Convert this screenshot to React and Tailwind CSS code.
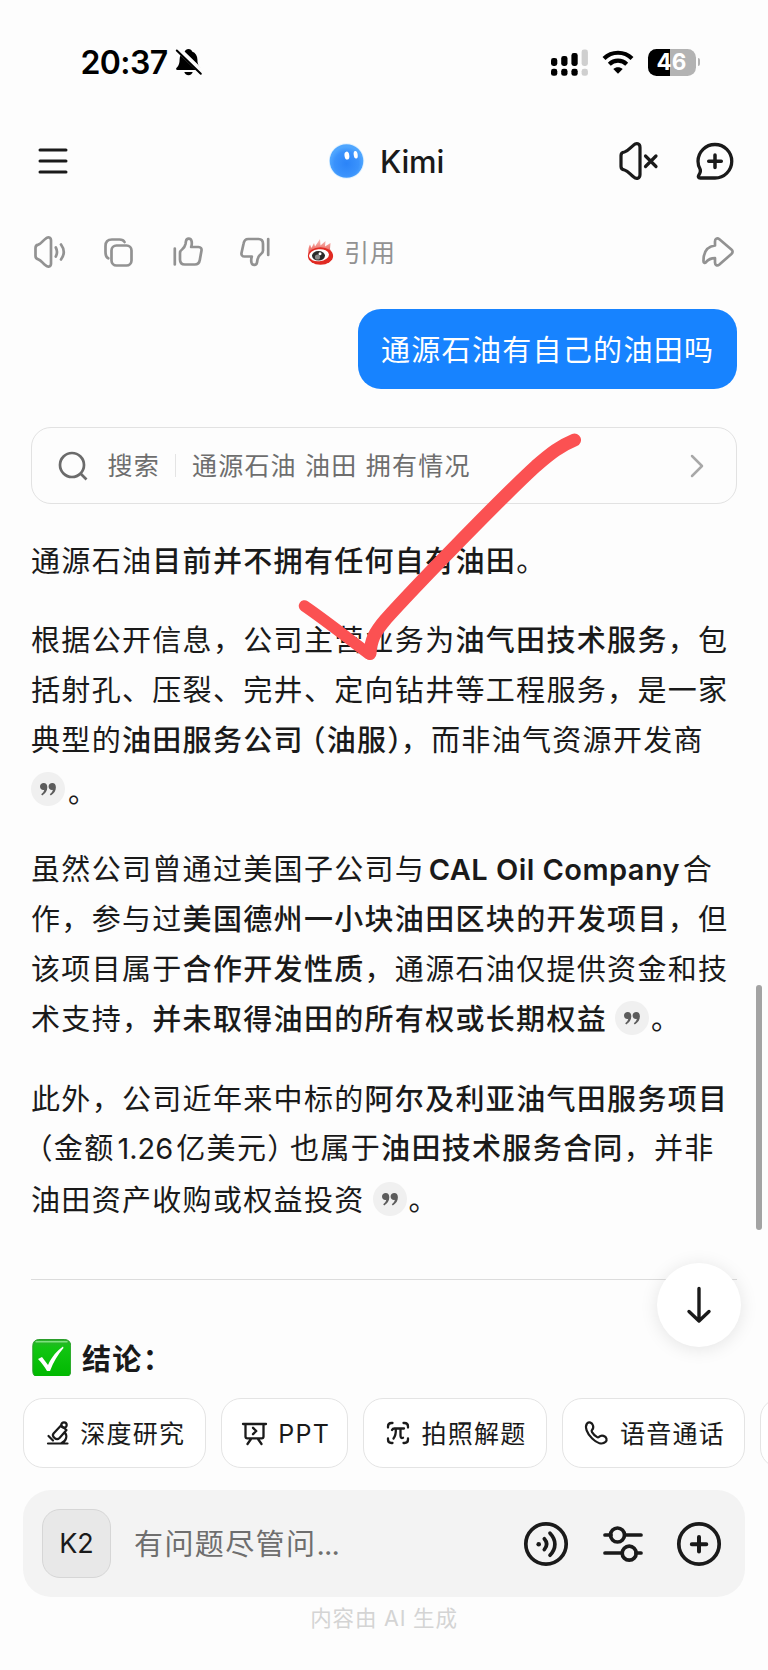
import { clsx } from "clsx";

const INK = "#1a1a1a";

function Icon({ w, h, stroke = INK, sw = 3, className, children }) {
  return (
    <svg
      width={w}
      height={h}
      viewBox={`0 0 ${w} ${h}`}
      fill="none"
      stroke={stroke}
      strokeWidth={sw}
      strokeLinecap="round"
      strokeLinejoin="round"
      className={clsx("shrink-0 overflow-visible", className)}
    >
      {children}
    </svg>
  );
}

function StatusBar() {
  return (
    <div className="flex h-[124px] items-center pl-[80.500px] pr-[68px]">
      <span className="w-[94.500px] whitespace-nowrap pt-[2px] text-[32px] font-semibold leading-none tracking-[-0.6px] text-black">
        20:37
      </span>
      <Icon w={27} h={28} stroke="none">
        <path
          d="M13.5 1c-1.9 0-3.3 1-3.6 2.4C6.300 4.700 4.600 7.800 4.600 11.500c0 4.800-1.400 6.600-3 8.300-1 1.200-.5 2.200.8 2.200h22.200c1.300 0 1.800-1 .8-2.200-1.600-1.700-3-3.500-3-8.300 0-3.700-1.700-6.800-5.300-8.100C16.800 2 15.400 1 13.500 1z"
          fill="#000"
        />
        <path d="M9.300 24h8.400c-.5 2-2 3.200-4.200 3.200S9.800 26 9.300 24z" fill="#000" />
        <path d="M3.200 1.200 27.500 24.800" stroke="#fdfdfd" strokeWidth="5.500" />
        <path d="M1.800 2.500 25.800 25.800" stroke="#000" strokeWidth="2" />
      </Icon>
      <Icon w={38} h={27} stroke="none" className="ml-auto">
        <rect x="0" y="9" width="6.300" height="8" rx="2.400" fill="#000" />
        <rect x="10.200" y="7" width="6.300" height="10" rx="2.400" fill="#000" />
        <rect x="20.400" y="4" width="6.300" height="13" rx="2.400" fill="#000" />
        <rect x="30.600" y="0.500" width="6.300" height="16.500" rx="2.400" fill="#cfcfcf" />
        <rect x="0" y="19.800" width="6.300" height="7" rx="2.400" fill="#000" />
        <rect x="10.200" y="19.800" width="6.300" height="7" rx="2.400" fill="#000" />
        <rect x="20.400" y="19.800" width="6.300" height="7" rx="2.400" fill="#000" />
        <rect x="30.600" y="19.800" width="6.300" height="7" rx="2.400" fill="#cfcfcf" />
      </Icon>
      <Icon w={32} h={24} stroke="#000" sw={4.2} className="ml-[13px]">
        <path d="M2 8.500C9.800.8 22.200.8 30 8.500" strokeLinecap="butt" />
        <path d="M7.300 14.200c4.900-4.700 12.500-4.700 17.400 0" strokeLinecap="butt" />
        <path d="M11.300 19c2.700-2.500 6.700-2.500 9.400 0L16 23.700z" fill="#000" stroke="none" />
      </Icon>
      <div className="ml-[14px] flex items-center gap-[2px]">
        <div className="flex h-[27px] w-[48px] items-center justify-center rounded-[8.500px] bg-[linear-gradient(to_right,#000_46%,#b3b3b3_46%)] pt-px text-[22.500px] font-bold leading-none text-white">
          46
        </div>
        <div className="h-[8px] w-[2.500px] rounded-r-full bg-[#b3b3b3]" />
      </div>
    </div>
  );
}

function Header() {
  return (
    <header className="flex h-[74px] items-center pl-[38px] pr-[35px]">
      <Icon w={30} h={26} sw={3}>
        <path d="M2 2h26M2 13h26M2 24h26" />
      </Icon>
      <div className="ml-[261px] flex items-center">
        <svg width="36" height="36" viewBox="0 0 36 36" className="shrink-0">
          <defs>
            <radialGradient id="kimiBall" cx="50%" cy="58%" r="50%">
              <stop offset="0%" stopColor="#2b84f8" />
              <stop offset="72%" stopColor="#3a92fc" />
              <stop offset="100%" stopColor="#4fa6ff" />
            </radialGradient>
          </defs>
          <circle cx="17.500" cy="18" r="17.800" fill="#dff1ff" />
          <circle cx="17.500" cy="18" r="16.800" fill="url(#kimiBall)" />
          <ellipse cx="17.900" cy="12.600" rx="2.400" ry="4" fill="#fff" transform="rotate(-8 17.900 12.600)" />
          <ellipse cx="26.700" cy="11.700" rx="2" ry="3.800" fill="#fff" transform="rotate(-8 26.700 11.700)" />
        </svg>
        <span className="ml-[15px] text-[31px] font-medium leading-none tracking-[-0.2px] text-[#1a1a1a]">
          Kimi
        </span>
      </div>
      <Icon w={40} h={38} sw={3.2} className="ml-auto">
        <path d="M2 13.500c0-2 1.200-3.200 3.500-3.500 3.500-.8 5.500-4 9-6.800C17.500.4 21 1.500 21 5.500v27c0 4-3.500 5.100-6.500 2.300-3.500-2.800-5.500-6-9-6.800C3.200 27.700 2 26.500 2 24.500z" />
        <path d="m26.500 14 10.500 10.500M37 14 26.500 24.500" />
      </Icon>
      <Icon w={37} h={38} sw={3.300} className="ml-[36.500px] mr-[0.500px]">
        <path d="M19 2.500a16.500 16.500 0 1 1 0 33.500H4.200c-1.800 0-2.300-1.200-1.500-2.600 1.200-1.900 2.300-3.900 1.500-6C2.700 25 2 22.300 2 19.300A16.900 16.900 0 0 1 19 2.500z" />
        <path d="M19 13v12.500M12.700 19.200h12.600" strokeWidth="3.500" />
      </Icon>
    </header>
  );
}

function WeiboLogo() {
  return (
    <svg width="27" height="26" viewBox="0 0 27 26" className="shrink-0">
      <defs>
        <linearGradient id="flame" x1="0" y1="0" x2="0" y2="1">
          <stop offset="0" stopColor="#f8c4be" />
          <stop offset="1" stopColor="#e8463e" />
        </linearGradient>
      </defs>
      <path d="M1.500 15C1 10 2 7 3 5.500L4.500 9 7 4l1 3.500L13 0l.5 6.500L18.500 2l-.5 5.500L23.500 4l-.5 6 2.500 6z" fill="url(#flame)" />
      <ellipse cx="13.500" cy="17" rx="12.600" ry="8.800" fill="#e02a22" />
      <ellipse cx="12" cy="16.300" rx="10" ry="6" fill="#fff" transform="rotate(-6 12 16.300)" />
      <ellipse cx="11.500" cy="16.800" rx="6.500" ry="4.800" fill="#2a2a2a" />
      <circle cx="10.500" cy="18" r="2.600" fill="#8a8a8a" />
      <circle cx="13" cy="14.800" r="1.500" fill="#fff" />
    </svg>
  );
}

function ActionRow() {
  const gray = "#929292";
  return (
    <div className="flex h-[106px] items-center px-[34px] pt-[2px] text-[#929292]">
      <Icon w={32} h={32} stroke={gray} sw={2.700}>
        <path d="M1.500 12c0-2 1-3 2.800-3.400C7.200 7.800 8.500 5 11.500 2.700 14 .5 17 1.200 17 4.500v23c0 3.300-3 4-5.500 1.800-3-2.300-4.300-5.100-7.200-5.900C2.500 23 1.500 22 1.500 20z" />
        <path d="M21.800 11.500c1.600 3 1.600 6 0 9M27 8.500c3.700 5 3.700 10 0 15" />
      </Icon>
      <Icon w={29} h={29} stroke={gray} sw={2.700} className="ml-[38px]">
        <rect x="7.500" y="7.500" width="20" height="20" rx="5" />
        <path d="M20.500 4C19.500 2 18 1.500 15.500 1.500H8c-4.500 0-6.500 2-6.500 6.500v6c0 3 .5 5.300 2.800 6.300" />
      </Icon>
      <Icon w={30} h={30} stroke={gray} sw={2.700} className="ml-[39.500px]">
        <path d="M1.800 11.500v16M7 16c0-1.700.7-2.600 2-3.500 2-1.500 3-3 3.500-5.500l.5-3c.5-3 4.500-3.500 5.500-.2.6 2.200.3 4.200-.3 6.200h7.300c2.300 0 3.300 1.600 3 3.500l-1.700 9.500c-.5 3-2.300 4.500-5 4.500h-10C8.500 27.500 7 26 7 22.500z" />
      </Icon>
      <Icon w={30} h={30} stroke={gray} sw={2.700} className="ml-[37.500px]">
        <path d="M28.200 2v16M23 13.500c0 1.700-.7 2.600-2 3.500-2 1.500-3 3-3.500 5.500l-.5 3c-.5 3-4.500 3.500-5.500.2-.6-2.200-.3-4.200.3-6.200H4.500c-2.300 0-3.300-1.600-3-3.500L3.600 6.500C4.100 3.500 5.500 2 8.200 2h10.300C21.500 2 23 3.500 23 7z" />
      </Icon>
      <div className="ml-[37px] flex items-center gap-[10px]">
        <WeiboLogo />
        <span className="pt-[2px] text-[25px] leading-none tracking-[1px]">引用</span>
      </div>
      <Icon w={32} h={30} stroke={gray} sw={2.700} className="ml-auto">
        <path d="M13 8.500V4.500c0-3 2.200-4 4.400-2.200l12 10.200c1.600 1.400 1.600 3 0 4.500l-12 10.500c-2.200 1.800-4.400.8-4.400-2v-4.300c-4.500 0-6.800 1.300-9 4-1.300 1.300-2.500.7-2.500-1C1.300 15.500 5 9.500 13 8.500z" />
      </Icon>
    </div>
  );
}

function SearchCard() {
  return (
    <div className="mx-[31px] mt-[38px] flex h-[77px] items-center rounded-[20px] border border-[#e2e2e2] pl-[27px] pr-[33px] text-[25px] tracking-[1.220px] text-[#6e6e6e]">
      <Icon w={28} h={28} stroke="#6b6b6b" sw={2.700}>
        <circle cx="13" cy="13" r="12" />
        <path d="m21.500 21.500 6 6" strokeLinecap="butt" />
      </Icon>
      <span className="ml-[20.500px] pt-[2px]">搜索</span>
      <span className="ml-[15.500px] h-[23px] w-px bg-[#e4e4e4]" />
      <span className="ml-[15.500px] whitespace-nowrap pt-[2px]">通源石油 油田 拥有情况</span>
      <Icon w={12} h={22} stroke="#a8a8a8" sw={2.500} className="ml-auto">
        <path d="m1 1 10 10L1 21" />
      </Icon>
    </div>
  );
}

function Cite({ className }) {
  return (
    <span
      className={clsx(
        "mb-[3px] inline-flex h-[34px] w-[34px] items-center justify-center rounded-full bg-[#f0f0f0]",
        className,
      )}
    >
      <svg width="16" height="13" viewBox="0 0 16 13" fill="#5c5c5c">
        <path d="M3.700 0C1.600 0 0 1.500 0 3.500S1.500 7 3.300 7c.4 0 .7 0 1-.2C4 8.500 2.800 10 1.200 11.200l1 1.300C5.500 10.500 7.300 7.500 7.300 4.200 7.300 1.600 5.900 0 3.700 0z" />
        <path d="M12.300 0c-2.100 0-3.700 1.500-3.700 3.500S10.100 7 11.900 7c.4 0 .7 0 1-.2-.3 1.700-1.500 3.200-3.100 4.400l1 1.300c3.300-2 5.100-5 5.100-8.300 0-2.600-1.400-4.200-3.600-4.200z" />
      </svg>
    </span>
  );
}

const B = ({ children }) => <b className="font-medium">{children}</b>;

// half-width bracket, side space comes from the margin
const Paren = ({ children, className }) => (
  <span className={clsx("[font-feature-settings:'halt']", className)}>{children}</span>
);

function Line({ children, className }) {
  return <span className={clsx("flex h-[49.8px] items-center whitespace-pre", className)}>{children}</span>;
}

function Answer() {
  return (
    <article className="px-[31px] pt-[32.500px] text-[29px] leading-[49.800px] tracking-[1.320px] text-[#1a1a1a]">
      <p>
        <Line>
          通源石油<B>目前并不拥有任何自有油田</B>。
        </Line>
      </p>
      <p className="mt-[30px]">
        <Line>
          根据公开信息，公司主营业务为<B>油气田技术服务</B>，包
        </Line>
        <Line>括射孔、压裂、完井、定向钻井等工程服务，是一家</Line>
        <Line>
          典型的<B>油田服务公司</B>
          <b className="ml-[7px] font-medium">
            <Paren>（</Paren>
          </b>
          <B>油服</B>
          <b className="-mr-[2.500px] font-medium">
            <Paren>）</Paren>
          </b>
          ，而非油气资源开发商
        </Line>
        <Line>
          <Cite />
          <span className="ml-[3px] pt-[5px]">。</span>
        </Line>
      </p>
      <p className="mt-[30px]">
        <Line>
          虽然公司曾通过美国子公司与
          <b className="ml-[3.500px] mr-[2.500px] font-semibold tracking-[0.450px]">CAL Oil Company</b>合
        </Line>
        <Line>
          作，参与过<B>美国德州一小块油田区块的开发项目</B>，但
        </Line>
        <Line>
          该项目属于<B>合作开发性质</B>，通源石油仅提供资金和技
        </Line>
        <Line>
          术支持，<B>并未取得油田的所有权或长期权益</B>
          <Cite className="ml-[8px] mr-[2px]" />。
        </Line>
      </p>
      <p className="mt-[30px]">
        <Line>
          此外，公司近年来中标的<B>阿尔及利亚油气田服务项目</B>
        </Line>
        <Line>
          <Paren className="ml-[7px]">（</Paren>金额
          <span className="ml-[3px] mr-[3px] tracking-[0px]">1.26</span>亿美元
          <Paren className="mr-[7px]">）</Paren>也属于<B>油田技术服务合同</B>，并非
        </Line>
        <Line className="mt-[1.500px]">
          油田资产收购或权益投资
          <Cite className="ml-[8px] mr-[2px]" />。
        </Line>
      </p>
      <hr className="mt-[53px] border-[#dcdcdc]" />
      <div className="mt-[54px] flex h-[42px] items-center overflow-hidden">
        <svg width="40" height="42" viewBox="0 0 40 42" className="shrink-0">
          <defs>
            <linearGradient id="okGreen" x1="0" y1="0" x2="0" y2="1">
              <stop offset="0" stopColor="#2fb02f" />
              <stop offset="0.220" stopColor="#12c512" />
              <stop offset="1" stopColor="#00b800" />
            </linearGradient>
          </defs>
          <rect x="1.800" y="5.500" width="38" height="38" rx="6" fill="url(#okGreen)" stroke="#2a9d2a" />
          <path d="M5 7.700h31" stroke="#7fe07f" strokeWidth="1.500" strokeLinecap="round" />
          <path d="M7 25l4-2 6 8C21 22 26 17 32 12.500l.5 1.500C26.500 21 22.500 28 19 37h-3C13.500 32.500 10.500 28.500 7 25z" fill="#fff" />
        </svg>
        <span className="ml-[11px] mt-[10px] font-bold">结论：</span>
      </div>
    </article>
  );
}

const CHIPS = [
  {
    label: "深度研究",
    width: "w-[183px]",
    icon: (
      <Icon w={22} h={24} sw={2.200} className="ml-[3px]">
        <path d="M1 22.500h19.500M1.500 15l4.500 4.500M14.500 22c4.800-1.800 6.200-7 3.300-10.500M6.500 12.500 14 4.500l5.500 4.500-7 8c-1.500 1.500-3.500 1.300-4.800.2S5.300 14 6.500 12.500z" />
        <circle cx="17" cy="4" r="2.700" />
      </Icon>
    ),
  },
  {
    label: "PPT",
    width: "w-[127px]",
    icon: (
      <Icon w={25} h={23} sw={2.300} className="ml-[3px]">
        <path d="M1 2h23M3.500 2v12.500c0 1.200.6 1.800 1.800 1.800h14.400c1.200 0 1.800-.6 1.800-1.800V2M9 17l-3.500 5M16 17l3.500 5M11 5.800l3.300 3.200-3.300 3.200" />
      </Icon>
    ),
  },
  {
    label: "拍照解题",
    width: "w-[183.500px]",
    icon: (
      <Icon w={24} h={24} sw={2.300} className="ml-[3px]">
        <path d="M2 6.500V5.500C2 3 3 2 5.500 2h1M17.500 2h1C21 2 22 3 22 5.500v1M22 17.500v1c0 2.500-1 3.500-3.500 3.500h-1M6.500 22h-1C3 22 2 21 2 18.500v-1" />
        <path d="M6 9c.6-1.300 1.300-1.500 2.500-1.500H18M9.800 8c.2 4-.3 7-2.300 9.500M14.500 8v6.500c0 2 .8 3 2.500 2.300" />
      </Icon>
    ),
  },
  {
    label: "语音通话",
    width: "w-[183.500px]",
    icon: (
      <Icon w={24} h={24} sw={2.200} className="ml-[3px]">
        <path d="M3 2.500C5.200.5 8 1.500 9 4.500c.7 2.200.2 3.300-1 4.500-.6.700-.5 1.300 0 2.100 1.200 1.900 2.800 3.500 4.800 4.800.8.500 1.500.6 2.200 0 1.300-1.200 2.500-1.700 4.500-1 3.200 1.100 4 4 2 6-3.200 3-8.500 1.300-13.300-3.400C2.800 12.500.5 6 3 2.500z" />
      </Icon>
    ),
  },
  { label: "", width: "w-[100px]", icon: null },
];

function Chips() {
  return (
    <div className="mt-[22.500px] flex h-[70px] gap-[15px] overflow-hidden pl-[23px]">
      {CHIPS.map((c, i) => (
        <button
          key={i}
          className={clsx(
            "flex h-full shrink-0 items-center justify-center gap-[11.500px] rounded-[20px] border border-[#e4e4e4] bg-white text-[25px] tracking-[1.300px] text-[#1a1a1a]",
            c.width,
          )}
        >
          {c.icon}
          <span className="whitespace-nowrap pt-[3px]">{c.label}</span>
        </button>
      ))}
    </div>
  );
}

function InputBar() {
  return (
    <div className="mx-[23px] mt-[22px] flex h-[107px] items-center rounded-[28px] bg-[#f3f3f3] pl-[19px] pr-[24px]">
      <button className="flex h-[69px] w-[69px] items-center justify-center rounded-[18px] border border-[#d6d6d6] bg-[#e8e8e8] pt-[2px] text-[27px] text-[#1a1a1a]">
        K2
      </button>
      <span className="ml-[23px] whitespace-nowrap pt-[2px] text-[29px] tracking-[1.400px] text-[#6e6e6e]">
        有问题尽管问<span className="tracking-[-0.800px]">...</span>
      </span>
      <Icon w={44} h={44} sw={3.700} className="ml-auto">
        <circle cx="22" cy="22" r="20.200" />
        <circle cx="14.700" cy="22.200" r="2.300" fill={INK} stroke="none" />
        <path d="M20.300 16.800c3 3.400 3 7.400 0 10.800M26 11.200c6.500 6.800 6.500 15.200 0 22" />
      </Icon>
      <Icon w={40} h={36} sw={3.700} className="ml-[34.500px]">
        <path d="M2 9h6M22 9h16M2 27h17M33 27h5" />
        <circle cx="14.500" cy="9" r="7" />
        <circle cx="26.200" cy="27.200" r="7" />
      </Icon>
      <Icon w={44} h={44} sw={3.700} className="ml-[34.500px]">
        <circle cx="22" cy="22" r="20.200" />
        <path d="M22 15v14.500M14.800 22.200h14.500" strokeWidth="4" />
      </Icon>
    </div>
  );
}

export default function App() {
  return (
    <div className="relative h-[1670px] w-[768px] overflow-hidden bg-[#fdfdfd] font-['Inter','Noto_Sans_CJK_SC',sans-serif]">
      <StatusBar />
      <Header />
      <ActionRow />
      <div className="mr-[31px] mt-[5px] flex justify-end">
        <div className="flex h-[80px] w-[379px] items-center whitespace-nowrap rounded-[23px] bg-[#1783ff] pl-[23px] pt-[4px] text-[29px] tracking-[1.300px] text-white">
          通源石油有自己的油田吗
        </div>
      </div>
      <SearchCard />
      <Answer />
      <Chips />
      <InputBar />
      <p className="mt-[4px] text-center text-[21.500px] leading-[34px] tracking-[0.800px] text-[#d4d4d4]">
        内容由 AI 生成
      </p>

      {/* hand-drawn tick over the answer */}
      <svg
        width="300"
        height="250"
        viewBox="295 425 300 250"
        fill="none"
        stroke="#fb5152"
        strokeLinecap="round"
        strokeLinejoin="round"
        className="pointer-events-none absolute left-[295px] top-[425px]"
      >
        <path d="M304.500 606C325 620 345 636 369 654" strokeWidth="11.500" />
        <path d="M370 653.500C371 640 374 633 386 619C412 590 500 499 536 466C551 453 560 446 574.500 440" strokeWidth="13" />
      </svg>
      <div className="absolute left-[756px] top-[985px] h-[245px] w-[6px] rounded-full bg-[#a3a3a3]" />
      <button className="absolute left-[657px] top-[1263px] flex h-[84px] w-[84px] items-center justify-center rounded-full bg-white shadow-[0_2px_18px_rgba(0,0,0,0.1)]">
        <Icon w={24} h={36} sw={3.400}>
          <path d="M12 1.500v32M2 24.500l10 9.500 10-9.500" />
        </Icon>
      </button>
    </div>
  );
}
